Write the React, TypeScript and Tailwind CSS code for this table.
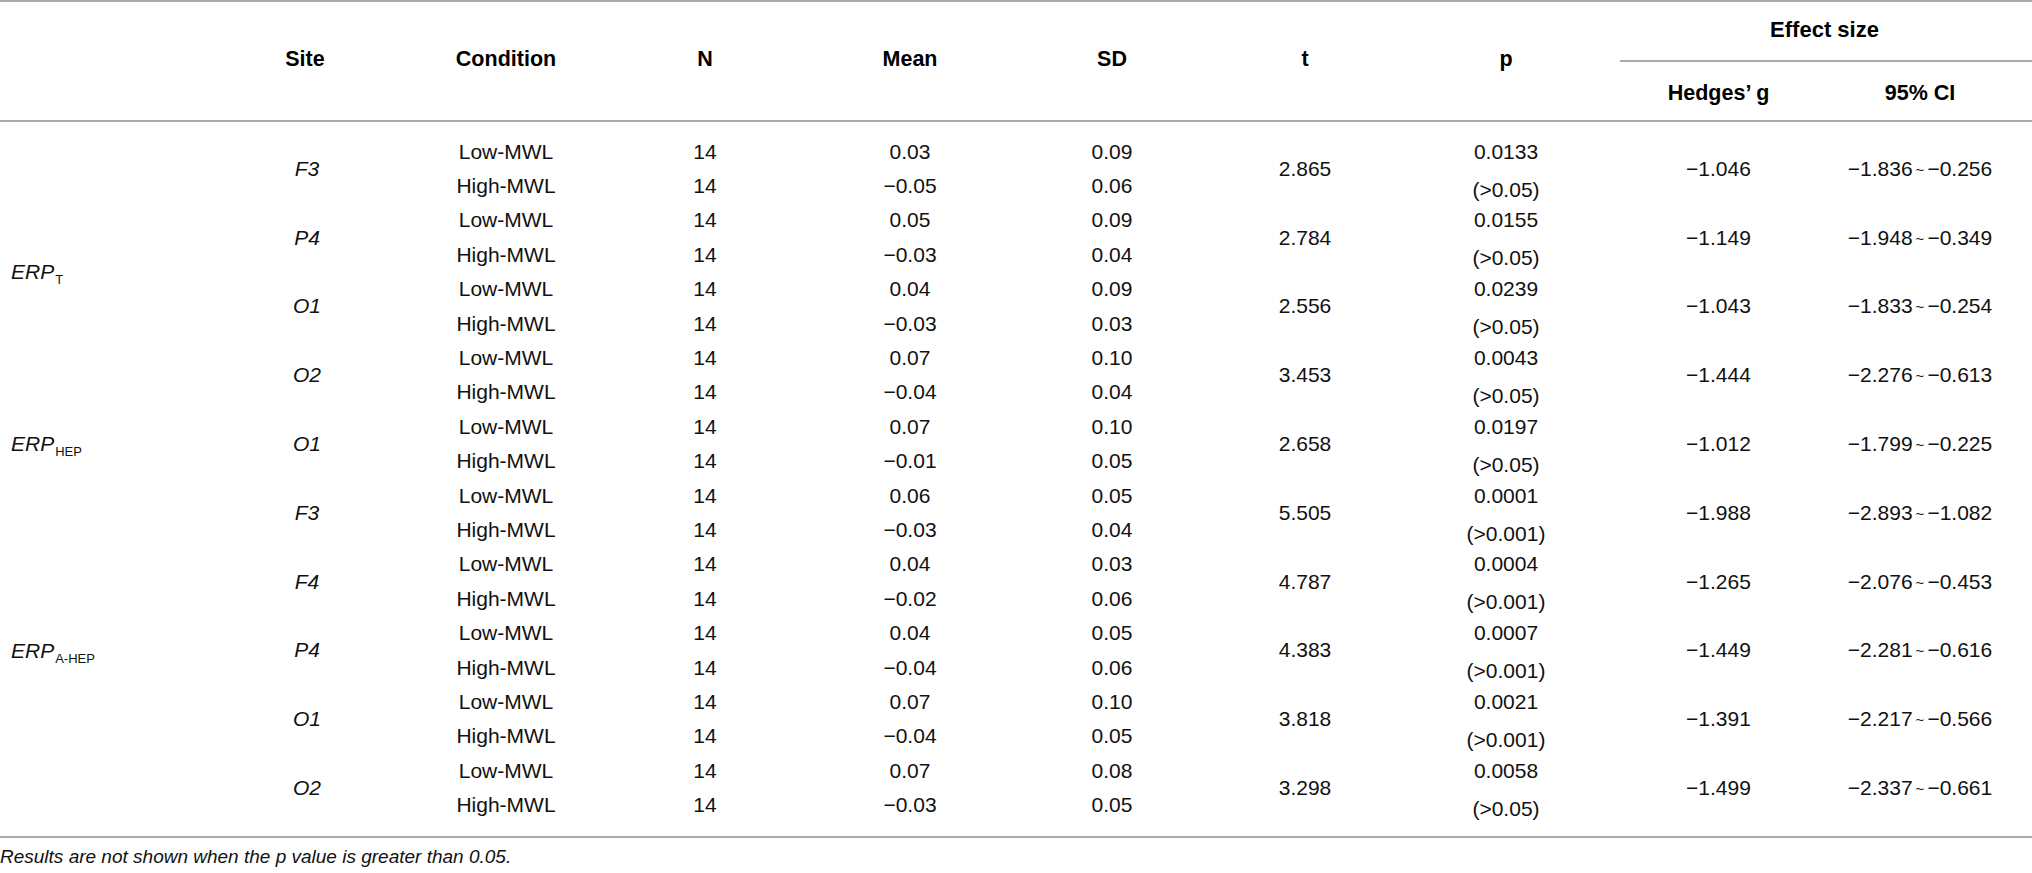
import React from "react";

type Group = {
  site: string;
  low: [string, string];
  high: [string, string];
  t: string;
  p: string;
  pNote: string;
  g: string;
  ci: [string, string];
};

const groups: Group[] = [
  { site: "F3", low: ["0.03", "0.09"], high: ["−0.05", "0.06"], t: "2.865", p: "0.0133", pNote: "(>0.05)", g: "−1.046", ci: ["−1.836", "−0.256"] },
  { site: "P4", low: ["0.05", "0.09"], high: ["−0.03", "0.04"], t: "2.784", p: "0.0155", pNote: "(>0.05)", g: "−1.149", ci: ["−1.948", "−0.349"] },
  { site: "O1", low: ["0.04", "0.09"], high: ["−0.03", "0.03"], t: "2.556", p: "0.0239", pNote: "(>0.05)", g: "−1.043", ci: ["−1.833", "−0.254"] },
  { site: "O2", low: ["0.07", "0.10"], high: ["−0.04", "0.04"], t: "3.453", p: "0.0043", pNote: "(>0.05)", g: "−1.444", ci: ["−2.276", "−0.613"] },
  { site: "O1", low: ["0.07", "0.10"], high: ["−0.01", "0.05"], t: "2.658", p: "0.0197", pNote: "(>0.05)", g: "−1.012", ci: ["−1.799", "−0.225"] },
  { site: "F3", low: ["0.06", "0.05"], high: ["−0.03", "0.04"], t: "5.505", p: "0.0001", pNote: "(>0.001)", g: "−1.988", ci: ["−2.893", "−1.082"] },
  { site: "F4", low: ["0.04", "0.03"], high: ["−0.02", "0.06"], t: "4.787", p: "0.0004", pNote: "(>0.001)", g: "−1.265", ci: ["−2.076", "−0.453"] },
  { site: "P4", low: ["0.04", "0.05"], high: ["−0.04", "0.06"], t: "4.383", p: "0.0007", pNote: "(>0.001)", g: "−1.449", ci: ["−2.281", "−0.616"] },
  { site: "O1", low: ["0.07", "0.10"], high: ["−0.04", "0.05"], t: "3.818", p: "0.0021", pNote: "(>0.001)", g: "−1.391", ci: ["−2.217", "−0.566"] },
  { site: "O2", low: ["0.07", "0.08"], high: ["−0.03", "0.05"], t: "3.298", p: "0.0058", pNote: "(>0.05)", g: "−1.499", ci: ["−2.337", "−0.661"] },
];

const COLS =
  "grid grid-cols-[210px_190px_212px_186px_224px_180px_206px_209px_203px_212px]";

function Erp({ sub, span }: { sub: string; span: string }) {
  return (
    <div className={`${span} flex items-center pl-[11px]`}>
      <span>
        <span className="italic">ERP</span>
        <span className="text-[13px] relative top-[5px] ml-[1px]">{sub}</span>
      </span>
    </div>
  );
}

function Cell({ children, className = "" }: { children: React.ReactNode; className?: string }) {
  return <div className={`flex items-center justify-center ${className}`}>{children}</div>;
}

export default function App() {
  const cells: React.ReactNode[] = [];
  groups.forEach((g, i) => {
    if (i === 0) cells.push(<Erp key="erp-t" sub="T" span="row-span-8" />);
    if (i === 4) cells.push(<Erp key="erp-hep" sub="HEP" span="row-span-2" />);
    if (i === 5) cells.push(<Erp key="erp-ahep" sub="A-HEP" span="row-span-10" />);
    cells.push(
      <Cell key={`s${i}`} className="row-span-2 italic pl-[4px]">
        {g.site}
      </Cell>,
      <Cell key={`c${i}l`}>Low-MWL</Cell>,
      <Cell key={`n${i}l`}>14</Cell>,
      <Cell key={`m${i}l`}>{g.low[0]}</Cell>,
      <Cell key={`d${i}l`}>{g.low[1]}</Cell>,
      <Cell key={`t${i}`} className="row-span-2">
        {g.t}
      </Cell>,
      <div key={`p${i}`} className="row-span-2 flex flex-col pr-[13px]">
        <div className="h-[34.4px] flex items-center justify-center">{g.p}</div>
        <div className="h-[34.4px] pt-[7px] flex items-center justify-center">{g.pNote}</div>
      </div>,
      <Cell key={`g${i}`} className="row-span-2">
        {g.g}
      </Cell>,
      <Cell key={`ci${i}`} className="row-span-2 pr-[12px]">
        <span>
          {g.ci[0]}
          <span className="text-[15px] mx-[3px] relative top-[-1px]">~</span>
          {g.ci[1]}
        </span>
      </Cell>,
      <Cell key={`c${i}h`}>High-MWL</Cell>,
      <Cell key={`n${i}h`}>14</Cell>,
      <Cell key={`m${i}h`}>{g.high[0]}</Cell>,
      <Cell key={`d${i}h`}>{g.high[1]}</Cell>
    );
  });

  return (
    <div className="w-[2032px] h-[873px] bg-white text-[#111] font-['Liberation_Sans',Arial,sans-serif] text-[21px] leading-none overflow-hidden">
      <div className="h-[2px] bg-[#a9a9a9]" />
      {/* Header */}
      <div className={`${COLS} h-[118px] font-bold text-[21.5px] text-black`}>
        <div />
        <Cell className="pb-[3px]">Site</Cell>
        <Cell className="pb-[3px]">Condition</Cell>
        <Cell className="pb-[3px]">N</Cell>
        <Cell className="pb-[3px]">Mean</Cell>
        <Cell className="pb-[3px]">SD</Cell>
        <Cell className="pb-[3px]">t</Cell>
        <Cell className="pb-[3px] pr-[13px]">p</Cell>
        <div className="col-span-2 flex flex-col">
          <div className="h-[58px] flex items-center justify-center pb-[3px] text-[22px]">Effect size</div>
          <div className="h-[2px] bg-[#a9a9a9] ml-[3px]" />
          <div className="flex-1 grid grid-cols-[203px_212px]">
            <Cell className="pt-[5px]">Hedges’ g</Cell>
            <Cell className="pt-[5px] pr-[12px]">95% CI</Cell>
          </div>
        </div>
      </div>
      <div className="h-[2px] bg-[#a9a9a9]" />
      {/* Body */}
      <div className="pt-[12px] pb-[14px]">
        <div className={`${COLS} grid-rows-20 h-[688px]`}>{cells}</div>
      </div>
      <div className="h-[2px] bg-[#a9a9a9]" />
      <div className="mt-[9px] text-[19px] italic leading-[20px]">
        Results are not shown when the p value is greater than 0.05.
      </div>
    </div>
  );
}
